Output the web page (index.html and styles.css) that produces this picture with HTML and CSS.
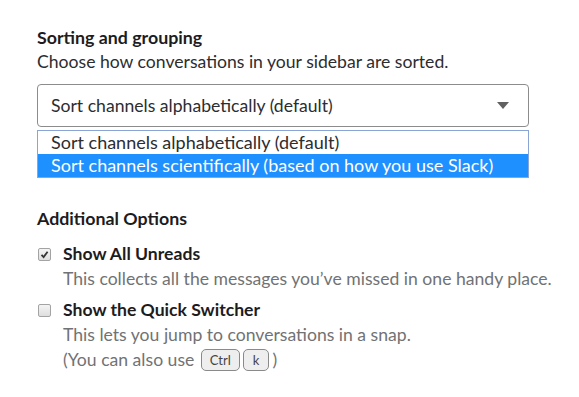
FILE: index.html
```html
<!DOCTYPE html>
<html lang="en">
<head>
    <meta charset="UTF-8">
    <meta name="viewport" content="width=device-width, initial-scale=1.0">
    <title>Sidebar Preferences</title>
    <link rel="stylesheet" href="styles.css">
</head>
<body>
    <div class="prefs">
        <div class="section">
            <h3>Sorting and grouping</h3>
            <p class="desc">Choose how conversations in your sidebar are sorted.</p>
            <div class="select">
                <span>Sort channels alphabetically (default)</span>
                <span class="arrow"></span>
            </div>
            <div class="menu">
                <div class="option">Sort channels alphabetically (default)</div>
                <div class="option selected">Sort channels scientifically (based on how you use Slack)</div>
            </div>
        </div>

        <div class="section options">
            <h3>Additional Options</h3>
            <div class="check-row">
                <span class="checkbox checked">
                    <svg width="9" height="9" viewBox="0 0 9 9"><path d="M1.5 4.8 L3.6 7 L7.6 1.8" fill="none" stroke="#333" stroke-width="1.8"/></svg>
                </span>
                <div>
                    <div class="label">Show All Unreads</div>
                    <div class="hint">This collects all the messages you’ve missed in one handy place.</div>
                </div>
            </div>
            <div class="check-row">
                <span class="checkbox"></span>
                <div>
                    <div class="label">Show the Quick Switcher</div>
                    <div class="hint">This lets you jump to conversations in a snap.</div>
                    <div class="hint">(You can also use <kbd>Ctrl</kbd><kbd>k</kbd>)</div>
                </div>
            </div>
        </div>
    </div>
</body>
</html>
```

FILE: styles.css
```css
body {
    margin: 0;
    background: #fff;
    font-family: Lato, "Open Sans", sans-serif;
    font-size: 17.6px;
    color: #1d1c1d;
}
.prefs {
    padding: 25px 40px 0 37px;
}
h3 {
    margin: 0 0 1px;
    font-size: 17.8px;
    font-weight: 700;
    line-height: 24px;
}
.desc {
    margin: 0 0 10px;
    line-height: 24px;
    color: #2c2d30;
}
.select {
    display: flex;
    align-items: center;
    justify-content: space-between;
    width: 492px;
    height: 43px;
    box-sizing: border-box;
    padding: 0 19px 0 13px;
    border: 1px solid #8c8c8c;
    border-radius: 4px;
    color: #2c2d30;
}
.arrow {
    width: 0;
    height: 0;
    border-left: 6px solid transparent;
    border-right: 6px solid transparent;
    border-top: 7px solid #616161;
}
.menu {
    width: 492px;
    box-sizing: border-box;
    margin-top: 3px;
    border: 1px solid #8aa4d6;
}
.option {
    height: 23px;
    line-height: 23px;
    padding-left: 13px;
    font-size: 18px;
    color: #2c2d30;
    white-space: nowrap;
}
.option.selected {
    background: #1e90ff;
    color: #fff;
}
.options {
    margin-top: 28px;
}
.options h3 {
    margin-bottom: 11px;
}
.check-row {
    display: flex;
    align-items: flex-start;
    margin-bottom: 6px;
}
.checkbox {
    display: flex;
    align-items: center;
    justify-content: center;
    flex-shrink: 0;
    width: 11px;
    height: 11px;
    margin: 7px 12px 0 1px;
    border: 1px solid #a3a3a3;
    border-radius: 2px;
    background: linear-gradient(#f4f4f4, #dedede);
}
.label {
    font-weight: 700;
    line-height: 25px;
}
.hint {
    line-height: 25px;
    color: #717274;
    white-space: nowrap;
}
kbd {
    display: inline-block;
    font-family: Lato, "Open Sans", sans-serif;
    font-size: 13px;
    line-height: 20px;
    padding: 0 8px;
    margin: 0 3px 0 2px;
    border: 1px solid #8a8a8a;
    border-radius: 5px;
    background: #eee;
    color: #444;
    vertical-align: 1px;
}
kbd + kbd {
    margin-left: 0;
    padding: 0 9px;
}
```
